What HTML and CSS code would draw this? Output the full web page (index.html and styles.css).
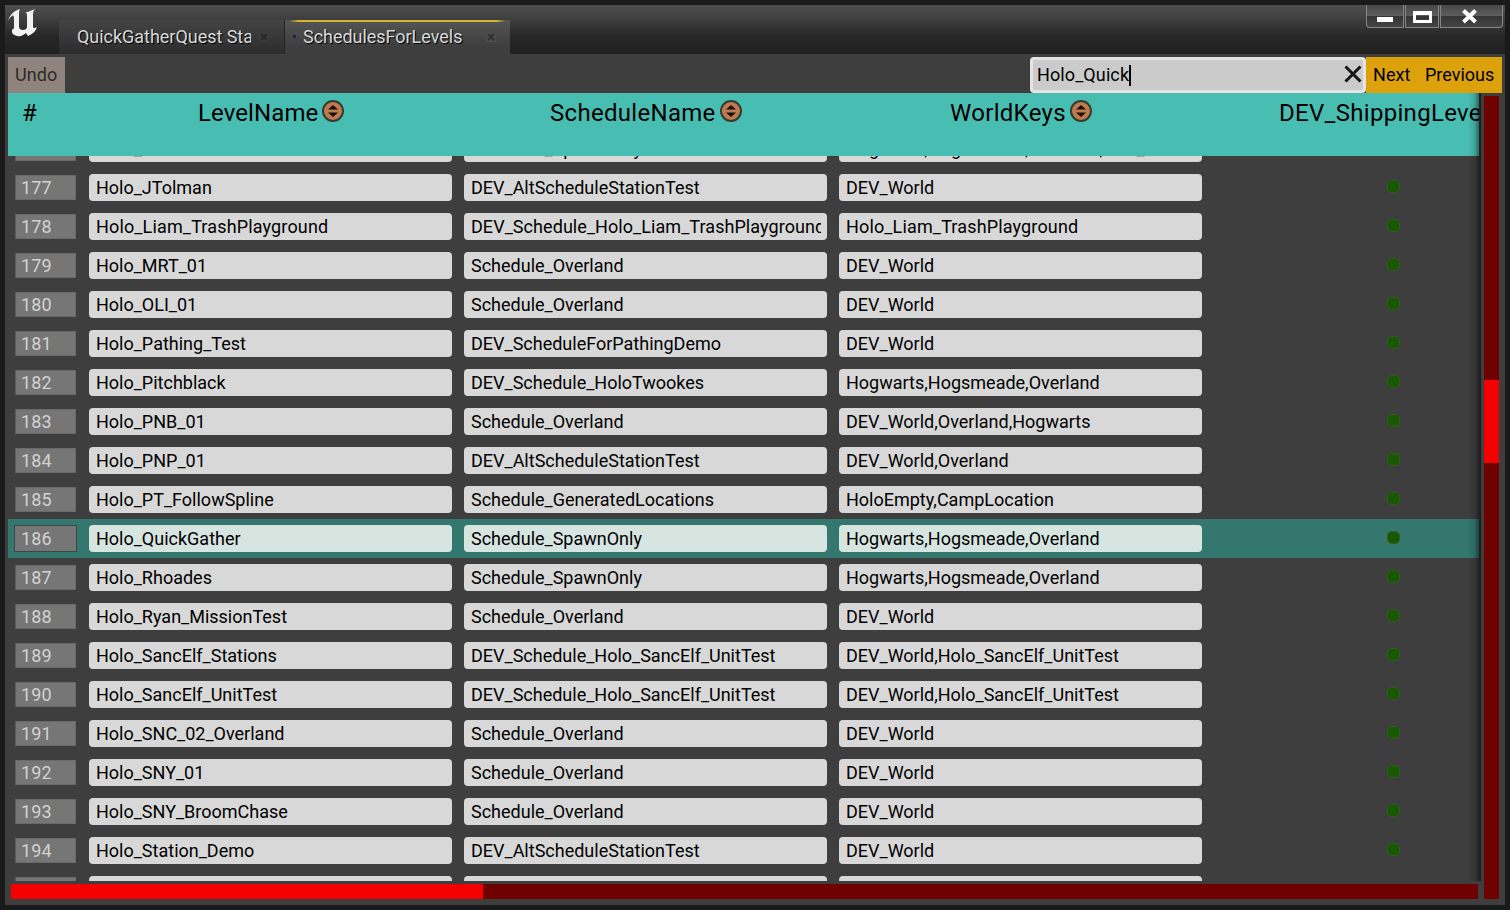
FILE: index.html
```html
<!DOCTYPE html>
<html lang="en">
<head>
<meta charset="utf-8">
<title>SchedulesForLevels</title>
<link rel="stylesheet" href="styles.css">
</head>
<body>
<div class="window">
  <header class="titlebar">
    <svg class="logo" viewBox="0 0 30 30"><path d="M0 14C2 7 6 4 12 2C11 4 11 5 11 7V20C11 22 13 23 15 23C17 23 19 22 19 20V8C19 6 18 6 17 6C20 5 24 3 27 2C25 4 25 6 25 8V19C25 21 26 22 29 20C28 24 25 27 20 29L18 26C15 28 13 30 9 29C5 28 4 26 4 24V22C5 23 6 22 6 20V11C6 9 5 8 4 9C2 10 1 12 0 14Z"/></svg>
    <div class="tab tab-back"><span class="tab-label">QuickGatherQuest Stations</span><svg class="tab-close" viewBox="0 0 10 10"><path d="M2 2L8 8M8 2L2 8"/></svg></div>
    <div class="tab tab-active"><i class="tab-mark"></i><span class="tab-label">SchedulesForLevels</span><svg class="tab-close" viewBox="0 0 10 10"><path d="M2 2L8 8M8 2L2 8"/></svg></div>
    <div class="controls">
      <div class="ctl ctl-min"><svg width="36" height="22"><rect x="10" y="12" width="16" height="5"/></svg></div>
      <div class="ctl ctl-max"><svg width="33" height="22"><path fill-rule="evenodd" d="M7 6H26V18H7ZM10 10V15H23V10Z"/></svg></div>
      <div class="ctl ctl-close"><svg width="61" height="22"><path class="stroke" d="M22.500 5.500L34.500 17M34.500 5.500L22.500 17"/></svg></div>
    </div>
  </header>
  <main class="panel">
    <div class="toolbar">
      <div class="undo">Undo</div>
      <div class="search"><span>Holo_Quick</span><i class="caret"></i><svg class="clear" viewBox="0 0 18 18"><path d="M1.500 1.500L16.500 16.500M16.500 1.500L1.500 16.500"/></svg></div>
      <div class="next">Next</div><div class="prev">Previous</div>
    </div>
    <div class="content">
      <div class="table">
        <div class="head">
          <div class="h-num">#</div>
          <div class="h-col h-level"><span>LevelName</span><svg class="sort" viewBox="0 0 22 22"><circle cx="11" cy="11" r="10"/><path d="M6 9.500L11 5L16 9.500ZM6 12.500L11 17L16 12.500Z"/></svg></div>
          <div class="h-col h-schedule"><span>ScheduleName</span><svg class="sort" viewBox="0 0 22 22"><circle cx="11" cy="11" r="10"/><path d="M6 9.500L11 5L16 9.500ZM6 12.500L11 17L16 12.500Z"/></svg></div>
          <div class="h-col h-world"><span>WorldKeys</span><svg class="sort" viewBox="0 0 22 22"><circle cx="11" cy="11" r="10"/><path d="M6 9.500L11 5L16 9.500ZM6 12.500L11 17L16 12.500Z"/></svg></div>
          <div class="h-last">DEV_ShippingLevel</div>
        </div>
        <div class="body"><div class="rows">
          <div class="row"><b>176</b><p>Holo_Intro</p><p>Schedule_SpawnOnly</p><p>Hogwarts,Hogsmeade,Overland,DEV_World</p><i></i></div>
          <div class="row"><b>177</b><p>Holo_JTolman</p><p>DEV_AltScheduleStationTest</p><p>DEV_World</p><i></i></div>
          <div class="row loose"><b>178</b><p>Holo_Liam_TrashPlayground</p><p>DEV_Schedule_Holo_Liam_TrashPlayground</p><p>Holo_Liam_TrashPlayground</p><i></i></div>
          <div class="row"><b>179</b><p>Holo_MRT_01</p><p>Schedule_Overland</p><p>DEV_World</p><i></i></div>
          <div class="row"><b>180</b><p>Holo_OLI_01</p><p>Schedule_Overland</p><p>DEV_World</p><i></i></div>
          <div class="row"><b>181</b><p>Holo_Pathing_Test</p><p>DEV_ScheduleForPathingDemo</p><p>DEV_World</p><i></i></div>
          <div class="row"><b>182</b><p>Holo_Pitchblack</p><p>DEV_Schedule_HoloTwookes</p><p>Hogwarts,Hogsmeade,Overland</p><i></i></div>
          <div class="row"><b>183</b><p>Holo_PNB_01</p><p>Schedule_Overland</p><p>DEV_World,Overland,Hogwarts</p><i></i></div>
          <div class="row"><b>184</b><p>Holo_PNP_01</p><p>DEV_AltScheduleStationTest</p><p>DEV_World,Overland</p><i></i></div>
          <div class="row"><b>185</b><p>Holo_PT_FollowSpline</p><p>Schedule_GeneratedLocations</p><p>HoloEmpty,CampLocation</p><i></i></div>
          <div class="row selected"><b>186</b><p>Holo_QuickGather</p><p>Schedule_SpawnOnly</p><p>Hogwarts,Hogsmeade,Overland</p><i></i></div>
          <div class="row"><b>187</b><p>Holo_Rhoades</p><p>Schedule_SpawnOnly</p><p>Hogwarts,Hogsmeade,Overland</p><i></i></div>
          <div class="row"><b>188</b><p>Holo_Ryan_MissionTest</p><p>Schedule_Overland</p><p>DEV_World</p><i></i></div>
          <div class="row"><b>189</b><p>Holo_SancElf_Stations</p><p>DEV_Schedule_Holo_SancElf_UnitTest</p><p>DEV_World,Holo_SancElf_UnitTest</p><i></i></div>
          <div class="row"><b>190</b><p>Holo_SancElf_UnitTest</p><p>DEV_Schedule_Holo_SancElf_UnitTest</p><p>DEV_World,Holo_SancElf_UnitTest</p><i></i></div>
          <div class="row"><b>191</b><p>Holo_SNC_02_Overland</p><p>Schedule_Overland</p><p>DEV_World</p><i></i></div>
          <div class="row"><b>192</b><p>Holo_SNY_01</p><p>Schedule_Overland</p><p>DEV_World</p><i></i></div>
          <div class="row"><b>193</b><p>Holo_SNY_BroomChase</p><p>Schedule_Overland</p><p>DEV_World</p><i></i></div>
          <div class="row"><b>194</b><p>Holo_Station_Demo</p><p>DEV_AltScheduleStationTest</p><p>DEV_World</p><i></i></div>
          <div class="row"><b></b><p></p><p></p><p></p></div>
        </div></div>
        <div class="edge-shade"></div>
      </div>
      <div class="hscroll"><div class="hthumb"></div></div>
      <div class="vscroll"><div class="vthumb"></div></div>
    </div>
  </main>
</div>
</body>
</html>
```
FILE: styles.css
```css
* { box-sizing: border-box; }
body { margin: 0; background: #191919; font-family: Roboto, sans-serif; font-size: 18px; color: #000; overflow: hidden; }
p { margin: 0; }
.window { width: 1510px; height: 910px; padding: 5px; display: flex; flex-direction: column; background: #1a1a1a; }
.titlebar { height: 49px; flex: none; display: flex; align-items: flex-end; background: linear-gradient(#4c4c4c 0, #494949 6px, #393939 18px, #262626 32px, #202020 49px); }
.logo { width: 30px; height: 30px; margin: 2px 21px 16px 3px; fill: #f2f2f2; align-self: flex-start; flex: none; }
.tab { height: 34px; display: flex; align-items: center; color: #d8d8d8; text-shadow: 1px 1px 0 #000; white-space: nowrap; }
.tab-label { overflow: hidden; line-height: 24px; letter-spacing: -0.03px; }
.tab-back { width: 226px; padding-left: 18px; background: linear-gradient(#444, #2c2c2c); border-right: 1px solid #222; }
.tab-back .tab-label { width: 174px; }
.tab-active { width: 225px; position: relative; padding-left: 8px; background: linear-gradient(#555, #3e3e3e 26px); }
.tab-active::before { content: ""; position: absolute; left: 0; right: 0; top: 0; height: 2px; background: linear-gradient(90deg, transparent 2%, #d3b62e 6%, #d3b62e 94%, transparent 98%); }
.tab-active .tab-label { width: 183px; }
.tab-mark { width: 3px; height: 3px; margin: -2px 7px 0 0; background: #20205a; }
.tab-close { width: 10px; height: 10px; margin-left: 8px; flex: none; background: #3b3b3b; stroke: #272727; stroke-width: 1.8; }
.tab-active .tab-close { margin-left: 0; background: #4c4c4c; stroke: #303030; }
.controls { align-self: flex-start; margin-left: auto; margin-right: 2px; display: flex; gap: 1px; }
.ctl { height: 23px; border: 1px solid #858585; border-top: 0; background: linear-gradient(#484848, #5c5c5c 48%, #353535 52%, #444); }
.ctl svg { display: block; fill: #fff; }
.ctl-min { width: 38px; border-bottom-left-radius: 4px; }
.ctl-max { width: 34px; }
.ctl-close { width: 63px; border-bottom-right-radius: 4px; }
.ctl .stroke { stroke: #fff; stroke-width: 4; }
.panel { height: 851px; padding: 3px; background: #3e3e3e; display: flex; flex-direction: column; }
.toolbar { height: 36px; flex: none; display: flex; line-height: 36px; letter-spacing: 0.1px; }
.undo { width: 57px; padding-left: 7px; background: #8f847d; color: #2d2a28; }
.search { width: 336px; margin-left: auto; padding: 0 4px; border: 3px solid #e4e4e4; border-radius: 4px; background: #cbcbcb; display: flex; align-items: center; line-height: 30px; }
.caret { width: 2px; height: 21px; background: #000; }
.clear { width: 18px; height: 18px; margin: -2px -3px 0 auto; stroke: #151515; stroke-width: 3; }
.next, .prev { background: #dda20b; }
.next { width: 52px; padding-left: 7px; }
.prev { width: 84px; padding-left: 7px; letter-spacing: 0; }
.content { display: grid; grid-template-columns: 1473px 1fr; grid-template-rows: 788px 1fr; height: 809px; }
.table { position: relative; overflow: hidden; display: flex; flex-direction: column; }
.head { width: 1471px; height: 63px; flex: none; overflow: hidden; display: flex; background: #48bdb2; font-size: 24px; line-height: 40px; letter-spacing: 0.3px; white-space: nowrap; }
.head > div { flex: none; }
.h-num { width: 75px; padding-left: 14px; }
.h-col { width: 375px; display: flex; }
.h-level { padding-left: 115px; letter-spacing: 0.1px; }
.h-schedule { padding-left: 92px; }
.h-world { width: 386px; padding-left: 117px; }
.sort { width: 22px; height: 22px; margin: 7px 0 0 4px; fill: #161008; }
.sort circle { fill: #c07a50; stroke: #353b30; stroke-width: 2; }
.h-last { padding-left: 60px; }
.body { height: 725px; flex: none; overflow: hidden; }
.rows { margin-top: -27px; width: 1471px; }
.row { height: 39px; padding-left: 7px; display: flex; align-items: center; }
.row b { width: 61px; height: 25px; margin-right: 13px; padding-left: 5px; border: 1px solid #696969; border-left-color: #5c5c5c; background: #767676; color: #d2d2d2; font-weight: 400; line-height: 24px; letter-spacing: 0.1px; }
.row p { width: 363px; height: 27px; margin-right: 12px; border: 0 solid transparent; border-width: 0 6px 0 7px; background: #d8d8d8; border-radius: 4px; line-height: 27px; white-space: nowrap; overflow: hidden; }
.loose p { letter-spacing: 0.15px; }
.loose p:nth-of-type(2) { letter-spacing: 0.06px; }
.row i { width: 13px; height: 13px; margin: -2px 0 0 173px; border-radius: 5px; border: 1px solid #2f5d22; background: #175800; }
.selected { background: #33776f; }
.selected b { height: 27px; width: 63px; margin-left: -1px; margin-right: 12px; padding-left: 6px; border-color: #3f4544; line-height: 26px; }
.selected p { background: #d6e5e0; }
.edge-shade { position: absolute; right: 0; top: 0; width: 13px; height: 788px; background: linear-gradient(90deg, transparent, #0002 50%, #0009); }
.hscroll { grid-row: 2; width: 1467px; height: 15px; margin: 3px 0 0 3px; background: #6f0000; }
.hthumb { width: 472px; height: 15px; background: #f40000; }
.vscroll { grid-column: 2; grid-row: 1 / 3; width: 15px; height: 803px; margin: 3px 0 0 3px; background: #6f0000; padding-top: 284px; }
.vthumb { height: 83px; background: #f40000; }
```
